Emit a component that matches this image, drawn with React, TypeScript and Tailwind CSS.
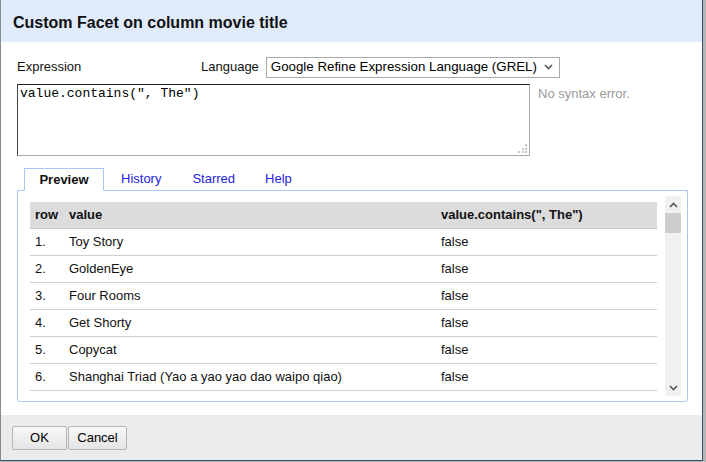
import React from "react";

const rows = [
  "Toy Story",
  "GoldenEye",
  "Four Rooms",
  "Get Shorty",
  "Copycat",
  "Shanghai Triad (Yao a yao yao dao waipo qiao)",
];

export default function App() {
  return (
    <div
      className="w-[706px] h-[462px] bg-[#b5b5b5] overflow-hidden"
      style={{ fontFamily: '"Liberation Sans", Arial, sans-serif' }}
    >
      <div className="w-[703px] h-[461px] border-l border-l-[#8a8a8a] border-r border-r-[#34506c] border-b border-b-[#34506c] bg-white flex flex-col">
        {/* header */}
        <div className="h-[42px] bg-[#e0ebfc] flex items-center pl-[12px] pt-[3px] shrink-0">
          <span className="text-[16px] font-bold text-[#111]">Custom Facet on column movie title</span>
        </div>
        {/* body */}
        <div className="flex-1 flex flex-col px-[16px] pt-[15px] text-[13px] text-[#111]">
          <div className="flex items-center h-[20px]">
            <span className="w-[184px]">Expression</span>
            <span className="mr-[7px]">Language</span>
            <div className="w-[294px] h-[21px] border border-[#a9a9a9] flex items-center pl-[4px] pr-[6px] justify-between">
              <span className="text-[13.3px] text-black">Google Refine Expression Language (GREL)</span>
              <svg width="9" height="6" viewBox="0 0 9 6">
                <path d="M1 1 L4.5 4.5 L8 1" stroke="#555" strokeWidth="1.6" fill="none" />
              </svg>
            </div>
          </div>
          <div className="flex mt-[7px]">
            <div className="relative w-[513px] h-[72px] border-t border-l border-t-[#222] border-l-[#444] border-r border-b border-r-[#aaa] border-b-[#aaa] bg-white">
              <div
                className="pl-[2px] text-[13px] leading-[18px] text-black"
                style={{ fontFamily: '"Liberation Mono", "Courier New", monospace' }}
              >
                value.contains(", The")
              </div>
              <svg className="absolute right-[1px] bottom-[1px]" width="11" height="11" viewBox="0 0 11 11">
                <rect x="8" y="1" width="2" height="2" fill="#c8c8c8" />
                <rect x="5" y="5" width="2" height="2" fill="#c8c8c8" />
                <rect x="8" y="5" width="2" height="2" fill="#c8c8c8" />
                <rect x="1" y="8" width="2" height="2" fill="#c8c8c8" />
                <rect x="5" y="8" width="2" height="2" fill="#c8c8c8" />
                <rect x="8" y="8" width="2" height="2" fill="#c8c8c8" />
              </svg>
            </div>
            <div className="ml-[8px] text-[#9a9a9a] text-[13px]">No syntax error.</div>
          </div>
          {/* tabs */}
          <div className="mt-[12px] flex items-end h-[22px] pl-[7px] relative z-10">
            <div className="h-[23px] w-[80px] border border-[#adc6f2] border-b-white bg-white flex items-center justify-center font-bold text-[13px] mb-[-1px]">
              Preview
            </div>
            <div className="h-[22px] flex items-center text-[#2424d8] text-[13px]">
              <span className="ml-[17px]">History</span>
              <span className="ml-[31px]">Starred</span>
              <span className="ml-[30px]">Help</span>
            </div>
          </div>
          <div className="w-[671px] h-[212px] border border-[#adc6f2] rounded-b-[3px] flex pl-[12px] pt-[11px] relative">
            <div className="w-[627px]">
              <div className="h-[27px] bg-[#dcdcdc] border-b border-[#c8c8c8] flex items-center font-bold text-[13px]">
                <span className="w-[39px] pl-[5px]">row</span>
                <span className="w-[372px]">value</span>
                <span>value.contains(", The")</span>
              </div>
              {rows.map((r, i) => (
                <div key={i} className="h-[27px] border-b border-[#cfcfcf] flex items-center text-[13px]">
                  <span className="w-[39px] pl-[5px]">{i + 1}.</span>
                  <span className="w-[372px]">{r}</span>
                  <span>false</span>
                </div>
              ))}
            </div>
            <div className="ml-[8px] mt-[-6px] w-[16px] h-[200px] bg-[#f0f0f0] flex flex-col items-center">
              <div className="h-[17px] flex items-center justify-center">
                <svg width="9" height="6" viewBox="0 0 9 6">
                  <path d="M1 5 L4.5 1.5 L8 5" stroke="#555" strokeWidth="1.6" fill="none" />
                </svg>
              </div>
              <div className="w-[16px] h-[20px] bg-[#cdcdcd]" />
              <div className="flex-1" />
              <div className="h-[17px] flex items-center justify-center">
                <svg width="9" height="6" viewBox="0 0 9 6">
                  <path d="M1 1 L4.5 4.5 L8 1" stroke="#555" strokeWidth="1.6" fill="none" />
                </svg>
              </div>
            </div>
          </div>
        </div>
        {/* footer */}
        <div className="h-[45px] bg-[#ebebeb] flex items-center pl-[11px] gap-[1px] shrink-0">
          <button className="w-[55px] h-[24px] border border-[#b4b4b4] rounded-[2px] bg-gradient-to-b from-[#f8f8f8] to-[#e4e4e4] text-[13px] text-black">
            OK
          </button>
          <button className="w-[59px] h-[24px] border border-[#b4b4b4] rounded-[2px] bg-gradient-to-b from-[#f8f8f8] to-[#e4e4e4] text-[13px] text-black">
            Cancel
          </button>
        </div>
      </div>
    </div>
  );
}
